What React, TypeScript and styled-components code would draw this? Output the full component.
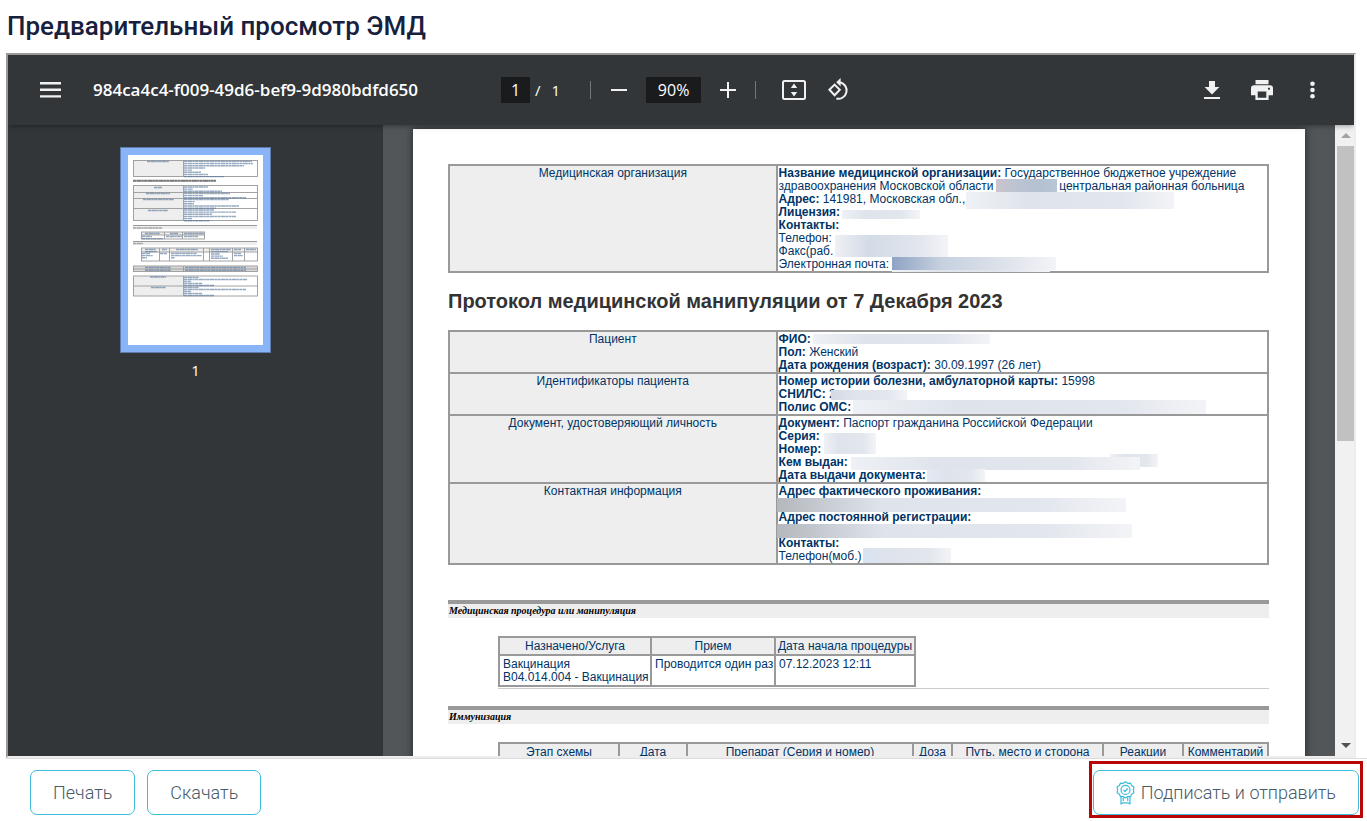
import React from 'react';
import styled, { createGlobalStyle } from 'styled-components';

const GlobalStyle = createGlobalStyle`
  * { box-sizing: border-box; }
  html, body { margin: 0; height: 100%; background: #fff; }
  #root { height: 100%; }
`;

const Screen = styled.div`
  height: 100vh;
  display: flex;
  flex-direction: column;
  overflow: hidden;
  font-family: Roboto, 'Liberation Sans', sans-serif;
`;

const Title = styled.h1`
  margin: 0;
  padding: 8px 7px 9px;
  font-size: 26px;
  line-height: 36px;
  font-weight: 500;
  color: #17203d;
  white-space: nowrap;
`;

const Viewer = styled.section`
  flex: 1;
  min-height: 0;
  margin: 0 11px 0 6px;
  display: flex;
  flex-direction: column;
  overflow: hidden;
  border: 2px solid;
  border-color: #999 #ededed #ededed #999;
`;

/* ---------- toolbar ---------- */

const Toolbar = styled.header`
  flex: none;
  height: 70px;
  display: grid;
  grid-template-columns: 493px 1fr auto;
  align-items: center;
  background: #323639;
  color: #fff;
  box-shadow: 0 0 6px rgba(0, 0, 0, 0.5);
  position: relative;
  z-index: 1;
  font-family: 'Open Sans', 'Noto Sans', sans-serif;
`;

const ToolGroup = styled.div<{ $gap?: number; $pad?: string }>`
  display: flex;
  align-items: center;
  gap: ${(p) => p.$gap ?? 0}px;
  padding: ${(p) => p.$pad ?? '0'};
`;

const IconButton = styled.button`
  width: 24px;
  height: 24px;
  padding: 0;
  border: 0;
  background: none;
  color: #f1f1f1;
  display: grid;
  place-items: center;
`;

const FileName = styled.span`
  font-size: 17px;
  line-height: 24px;
  font-weight: 600;
`;

const ToolInput = styled.input<{ $width: number }>`
  width: ${(p) => p.$width}px;
  height: 26px;
  padding: 0;
  border: 0;
  background: #191b1c;
  color: #fff;
  text-align: center;
  font: 400 16px/26px 'Open Sans', 'Noto Sans', sans-serif;
`;

const PageTotal = styled.span`
  display: flex;
  gap: 11px;
  padding: 0 30px 0 5px;
  font-size: 15px;
  line-height: 24px;
`;

const Divider = styled.span`
  width: 1px;
  height: 18px;
  background: #74777a;
`;

/* ---------- viewer body ---------- */

const Body = styled.div`
  flex: 1;
  min-height: 0;
  display: flex;
  overflow: hidden;
  background: #525659;
`;

const Sidebar = styled.aside`
  flex: none;
  width: 375px;
  background: #323639;
  display: flex;
  flex-direction: column;
  align-items: center;
  padding-top: 22px;
  color: #fff;
  font: 400 15px/20px 'Open Sans', 'Noto Sans', sans-serif;
`;

const Thumb = styled.button`
  padding: 7px;
  margin-bottom: 7px;
  border: 1px solid #5f7cab;
  background: #8ab4f8;
  display: block;
  line-height: 0;
`;

const Pane = styled.main`
  flex: 1;
  min-width: 0;
  padding: 4px 30px 0;
  overflow: hidden;
`;

const Page = styled.article`
  min-height: 1200px;
  padding: 35px 36px 0 35px;
  background: #fff;
  box-shadow: 0 0 8px rgba(0, 0, 0, 0.55);
  color: #003366;
  font: 400 12px/13px 'Liberation Sans', Arial, sans-serif;
`;

const Scrollbar = styled.div`
  flex: none;
  width: 19px;
  padding: 0 0 0 2px;
  background: #f1f1f1;
  display: flex;
  flex-direction: column;
  align-items: center;
`;

const ScrollArrow = styled.span<{ $down?: boolean }>`
  flex: none;
  height: 21px;
  display: grid;
  place-items: center;
  &::before {
    content: '';
    border: 5px solid transparent;
    border-${(p) => (p.$down ? 'top' : 'bottom')}-color: ${(p) => (p.$down ? '#505050' : '#a3a3a3')};
    border-${(p) => (p.$down ? 'bottom' : 'top')}-width: 0;
  }
`;

const ScrollTrack = styled.div`
  flex: 1;
  width: 100%;
  &::before {
    content: '';
    display: block;
    height: 50%;
    background: #c1c1c1;
  }
`;

/* ---------- document ---------- */

const InfoTable = styled.table`
  width: 100%;
  table-layout: fixed;
  border-collapse: collapse;
  th, td {
    border: 2px solid #999;
    padding: 1px 1px 0;
    vertical-align: top;
    font-weight: 400;
  }
  th {
    width: 40%;
    background: #eee;
    text-align: center;
  }
`;

const Lines = styled.div`
  position: relative;
  white-space: nowrap;
`;

const DocTitle = styled.h2`
  margin: 16px 0 17px;
  font-size: 20px;
  line-height: 24px;
  font-weight: 700;
  color: #333;
`;

type MaskProps = { $x: number; $y: number; $w: number; $h: number; $from?: string; $to?: string };

const Mask = styled.span<MaskProps>`
  position: absolute;
  left: ${(p) => p.$x}px;
  top: ${(p) => p.$y}px;
  width: ${(p) => p.$w}px;
  height: ${(p) => p.$h}px;
  background: linear-gradient(
    90deg,
    ${(p) => p.$from ?? '#eef1f5'},
    ${(p) => p.$to ?? '#dfe4ec'} 30%,
    ${(p) => (p.$to === '#bcc4d2' ? '#b3c1d1' : '#e2e6ed')} 75%,
    ${(p) => (p.$to === '#bcc4d2' ? '#b8c6d6' : '#f3f4f7')}
  );
`;

const NameGap = styled.span`
  display: inline-block;
  width: 59px;
`;

const SectionTitle = styled.h3<{ $top: number }>`
  margin: ${(p) => p.$top}px 0 18px;
  padding: 0 1px;
  border-top: 4px solid #999;
  background: #eee;
  color: #000;
  font: italic 700 10px/14px 'Liberation Serif', 'Times New Roman', serif;
`;

const Indent = styled.div`
  margin-left: 50px;
  border-bottom: 1px solid #ccc;
  padding-bottom: 1px;
`;

const DataTable = styled.table<{ $full?: boolean }>`
  width: ${(p) => (p.$full ? '100%' : '418px')};
  table-layout: fixed;
  border-collapse: collapse;
  white-space: nowrap;
  th, td {
    border: 2px solid #999;
    padding: 2px 0 1px 3px;
    vertical-align: top;
    font-weight: 400;
    text-align: left;
  }
  th {
    padding: 2px 0 1px;
    background: #eee;
    text-align: center;
  }
`;

/* ---------- footer ---------- */

const Footer = styled.footer`
  flex: none;
  height: 63px;
  margin-left: 6px;
  padding: 11px 8px 0 24px;
  border-top: 1px solid #ddd;
  display: flex;
  align-items: flex-start;
  gap: 12px;
`;

const ActionButton = styled.button`
  height: 45px;
  padding: 0 22px;
  border: 1px solid #3bbddb;
  border-radius: 7px;
  background: #fff;
  color: #485a69;
  display: flex;
  align-items: center;
  gap: 6px;
  font: 300 18px/24px Roboto, 'Liberation Sans', sans-serif;
  white-space: nowrap;
`;

const Highlight = styled.div`
  position: relative;
  margin-left: auto;
  &::after {
    content: '';
    position: absolute;
    inset: -9px -4px -3px;
    border: 3px solid #b90504;
    pointer-events: none;
  }
`;

/* ---------- drawings ---------- */

const MenuIcon = () => (
  <svg width="21" height="16" viewBox="0 0 21 16" fill="currentColor">
    <path d="M0 0h21v2.4H0zM0 6.6h21V9H0zM0 13.2h21v2.4H0z" />
  </svg>
);

const MinusIcon = () => (
  <svg width="16" height="16" viewBox="0 0 16 16" fill="currentColor">
    <path d="M0 7h16v2H0z" />
  </svg>
);

const PlusIcon = () => (
  <svg width="16" height="16" viewBox="0 0 16 16" fill="currentColor">
    <path d="M0 7h7V0h2v7h7v2H9v7H7V9H0z" />
  </svg>
);

const FitIcon = () => (
  <svg width="24" height="20" viewBox="0 0 24 20" fill="currentColor">
    <rect x="1" y="1" width="22" height="18" rx="1.5" fill="none" stroke="currentColor" strokeWidth="2" />
    <path d="M12 3.4l3.2 4.6H8.800zM12 16.600l3.200-4.600H8.800z" />
  </svg>
);

const RotateIcon = () => (
  <svg width="24" height="24" viewBox="0 0 24 24" fill="none" stroke="currentColor" strokeWidth="2">
    <path d="M7.6 6.6l5.2 5.2-5.2 5.4-5.2-5.4z" />
    <path d="M13 4.2a8.3 8.3 0 1 1-3.6 16.4" />
    <path d="M13.6 0v8.4L9.2 4.2z" fill="currentColor" stroke="none" />
  </svg>
);

const DownloadIcon = () => (
  <svg width="16" height="18" viewBox="0 0 16 18" fill="currentColor">
    <path d="M5 0h6v6h4.4L8 13.4.6 6H5zM0 16h16v2H0z" />
  </svg>
);

const PrintIcon = () => (
  <svg width="22" height="20" viewBox="0 0 22 20" fill="currentColor">
    <path
      fillRule="evenodd"
      d="M4.5 0h13v4.2h-13zM3.5 5.2h15A3.3 3.3 0 0 1 22 8.5v6.8h-4.4V20H4.4v-4.7H0V8.500a3.300 3.300 0 0 1 3.500-3.300zM6.700 11.500v6.200h8.600v-6.200zM18 7.600a1.100 1.100 0 1 0 .01 0z"
    />
  </svg>
);

const MoreIcon = () => (
  <svg width="5" height="18" viewBox="0 0 5 18" fill="currentColor">
    <circle cx="2.5" cy="2.7" r="2.3" />
    <circle cx="2.5" cy="9" r="2.3" />
    <circle cx="2.5" cy="15.3" r="2.3" />
  </svg>
);

const BadgeIcon = () => (
  <svg width="19" height="24" viewBox="0 0 19 24" fill="none" stroke="#3bbddb" strokeWidth="1.2" strokeLinejoin="round">
    <path d="M9.500 .8l2.300 1.500 2.700-.2 1.100 2.500 2.300 1.500-.5 2.800.5 2.800-2.300 1.500-1.100 2.500-2.700-.2-2.300 1.500-2.300-1.500-2.700.2-1.100-2.500L1.100 11.700l.5-2.800-.5-2.800 2.300-1.500 1.100-2.500 2.700.2z" />
    <circle cx="9.5" cy="8.9" r="4.5" />
    <path d="M7.500 9l1.500 1.500 2.700-3" />
    <path d="M5 16v7l2-1.200h5l2 1.200v-7M7.300 16.500V20M11.700 16.500V20" />
  </svg>
);

type Bars = { x: number; y: number; w: number }[];

const Scribble = ({ bars, color = '#4f7299' }: { bars: Bars; color?: string }) => (
  <g stroke={color} strokeWidth="1.4" strokeDasharray="3 .4 5 .3 2 .4" opacity=".6">
    {bars.map((b, i) => (
      <path key={i} d={`M${b.x} ${b.y}h${b.w}`} />
    ))}
  </g>
);

const stack = (x: number, y: number, widths: number[], step = 2.16): Bars =>
  widths.map((w, i) => ({ x, y: y + i * step, w }));

const Grid = ({ x, y, cols, rows }: { x: number; y: number; cols: number[]; rows: number[] }) => {
  const w = cols.reduce((a, b) => a + b, 0);
  const h = rows.reduce((a, b) => a + b, 0);
  let cx = x;
  let cy = y;
  return (
    <g stroke="#999" strokeWidth=".9" fill="none">
      <rect x={x} y={y} width={w} height={h} />
      {cols.slice(0, -1).map((c, i) => {
        cx += c;
        return <path key={i} d={`M${cx} ${y}v${h}`} />;
      })}
      {rows.slice(0, -1).map((r, i) => {
        cy += r;
        return <path key={`r${i}`} d={`M${x} ${cy}h${w}`} />;
      })}
    </g>
  );
};

const PageThumbnail = () => (
  <svg width="135" height="190" viewBox="0 0 135 190">
    <rect width="135" height="190" fill="#fff" />
    <g fill="#eee">
      <rect x="5" y="5" width="50" height="17" />
      <rect x="5" y="31" width="50" height="35" />
      <rect x="13" y="77" width="63" height="3" />
      <rect x="13" y="93" width="116" height="4" />
      <rect x="5" y="111" width="124" height="5" fill="#d9d9d9" />
      <rect x="5" y="121" width="50" height="20" />
      <rect x="5" y="71" width="124" height="3" />
      <rect x="5" y="87" width="124" height="3" />
    </g>
    <Grid x={5.5} y={5.5} cols={[50, 74]} rows={[16]} />
    <Grid x={5.5} y={30.5} cols={[50, 74]} rows={[7, 6, 10, 12]} />
    <path d="M5 70.500h124M5 86.500h124" stroke="#999" />
    <Grid x={13.5} y={77} cols={[23, 18, 22]} rows={[3, 4]} />
    <Grid x={13.5} y={93} cols={[18, 10, 34, 6, 23, 12, 13]} rows={[4, 9]} />
    <Grid x={5.5} y={111} cols={[50, 74]} rows={[3, 2.5]} />
    <Grid x={5.5} y={121} cols={[50, 74]} rows={[10, 10]} />
    <Scribble
      bars={[
        ...stack(56, 6.5, [68, 69, 60, 21, 8, 17, 24, 40]),
        ...stack(56, 32, [24, 9, 38]),
        ...stack(56, 38.5, [46, 19, 62]),
        ...stack(56, 44.5, [45, 11, 10, 55, 32]),
        ...stack(56, 55, [30, 52, 28, 52, 8, 26]),
        ...stack(19, 6.5, [22]),
        ...stack(26, 32.5, [8]),
        ...stack(18, 38.5, [24]),
        ...stack(15, 44.5, [31]),
        ...stack(20, 55.5, [20]),
        ...stack(17, 78.5, [15]),
        ...stack(42, 78.5, [8]),
        ...stack(56, 78.5, [20]),
        ...stack(14, 81.5, [10, 21]),
        ...stack(38, 81.5, [16]),
        ...stack(56, 81.5, [14]),
        ...stack(17, 94.5, [11, 12]),
        ...stack(34, 94.5, [5]),
        ...stack(48, 94.5, [22]),
        ...stack(83, 94.5, [20, 17]),
        ...stack(106, 94.5, [7]),
        ...stack(118, 94.5, [10]),
        ...stack(14, 98.5, [8, 11, 5]),
        ...stack(32, 98.5, [7]),
        ...stack(43, 98.5, [26, 31, 4]),
        ...stack(83, 99, [9, 12, 17]),
        ...stack(106, 98.5, [7, 9]),
        ...stack(17, 112.5, [26, 26], 2.7),
        ...stack(57, 112.5, [61, 61], 2.7),
        ...stack(22, 122, [16]),
        ...stack(23, 132.5, [15]),
        ...stack(56, 122.5, [15, 63, 7, 18, 30], 2),
        ...stack(56, 132.5, [15, 62, 7, 18, 30], 2),
      ]}
    />
    <Scribble color="#222" bars={[{ x: 5, y: 25.5, w: 83 }, { x: 5, y: 26, w: 83 }]} />
    <Scribble color="#777" bars={[{ x: 5, y: 73, w: 29 }, { x: 5, y: 88.5, w: 10 }]} />
  </svg>
);

/* ---------- page ---------- */

export default function App() {
  return (
    <Screen>
      <GlobalStyle />
      <Title>Предварительный просмотр ЭМД</Title>

      <Viewer>
        <Toolbar>
          <ToolGroup $gap={31} $pad="0 0 0 30px">
            <IconButton aria-label="Меню"><MenuIcon /></IconButton>
            <FileName>984ca4c4-f009-49d6-bef9-9d980bdfd650</FileName>
          </ToolGroup>
          <ToolGroup>
            <ToolInput $width={29} defaultValue="1" aria-label="Страница" />
            <PageTotal><span>/</span><span>1</span></PageTotal>
            <Divider />
            <ToolGroup $gap={15} $pad="0 15px 0 16px">
              <IconButton aria-label="Уменьшить"><MinusIcon /></IconButton>
              <ToolInput $width={55} defaultValue="90%" aria-label="Масштаб" />
              <IconButton aria-label="Увеличить"><PlusIcon /></IconButton>
            </ToolGroup>
            <Divider />
            <ToolGroup $gap={21} $pad="0 0 0 26px">
              <IconButton aria-label="По размеру страницы"><FitIcon /></IconButton>
              <IconButton aria-label="Повернуть"><RotateIcon /></IconButton>
            </ToolGroup>
          </ToolGroup>
          <ToolGroup $gap={26} $pad="0 30px 0 0">
            <IconButton aria-label="Скачать файл"><DownloadIcon /></IconButton>
            <IconButton aria-label="Распечатать"><PrintIcon /></IconButton>
            <IconButton aria-label="Ещё"><MoreIcon /></IconButton>
          </ToolGroup>
        </Toolbar>

        <Body>
          <Sidebar>
            <Thumb aria-label="Страница 1"><PageThumbnail /></Thumb>
            <span>1</span>
          </Sidebar>

          <Pane>
            <Page>
              <InfoTable>
                <tbody>
                  <tr>
                    <th scope="row">Медицинская организация</th>
                    <td>
                      <Lines>
                        <b>Название медицинской организации:</b> Государственное бюджетное учреждение<br />
                        здравоохранения Московской области <NameGap /> центральная районная больница<br />
                        <b>Адрес:</b> 141981, Московская обл.,<br />
                        <b>Лицензия:</b><br />
                        <b>Контакты:</b><br />
                        Телефон:<br />
                        Факс(раб.<br />
                        Электронная почта:
                        <Mask $x={217} $y={12} $w={61} $h={13} $from="#cbc4cc" $to="#bcc4d2" />
                        <Mask $x={187} $y={25} $w={208} $h={17} />
                        <Mask $x={63} $y={43} $w={78} $h={9} />
                        <Mask $x={56} $y={68} $w={113} $h={22} $to="#d3dbe6" />
                        <Mask $x={113} $y={95} $w={158} $h={10} />
                        <Mask $x={113} $y={90} $w={164} $h={13} $from="#8fa3c4" $to="#c6d0df" />
                      </Lines>
                    </td>
                  </tr>
                </tbody>
              </InfoTable>

              <DocTitle>Протокол медицинской манипуляции от 7 Декабря 2023</DocTitle>

              <InfoTable>
                <tbody>
                  <tr>
                    <th scope="row">Пациент</th>
                    <td>
                      <Lines>
                        <b>ФИО:</b><br />
                        <b>Пол:</b> Женский<br />
                        <b>Дата рождения (возраст):</b> 30.09.1997 (26 лет)
                        <Mask $x={34} $y={1} $w={177} $h={10} />
                      </Lines>
                    </td>
                  </tr>
                  <tr>
                    <th scope="row">Идентификаторы пациента</th>
                    <td>
                      <Lines>
                        <b>Номер истории болезни, амбулаторной карты:</b> 15998<br />
                        <b>СНИЛС:</b> 2<br />
                        <b>Полис ОМС:</b>
                        <Mask $x={52} $y={15} $w={76} $h={10} $from="#d3dae3" />
                        <Mask $x={74} $y={25} $w={353} $h={14} />
                      </Lines>
                    </td>
                  </tr>
                  <tr>
                    <th scope="row">Документ, удостоверяющий личность</th>
                    <td>
                      <Lines>
                        <b>Документ:</b> Паспорт гражданина Российской Федерации<br />
                        <b>Серия:</b><br />
                        <b>Номер:</b><br />
                        <b>Кем выдан:</b><br />
                        <b>Дата выдачи документа:</b>
                        <Mask $x={45} $y={16} $w={52} $h={21} />
                        <Mask $x={331} $y={37} $w={48} $h={13} />
                        <Mask $x={72} $y={40} $w={289} $h={13} />
                        <Mask $x={148} $y={52} $w={58} $h={13} $from="#e3eaf3" />
                      </Lines>
                    </td>
                  </tr>
                  <tr>
                    <th scope="row">Контактная информация</th>
                    <td>
                      <Lines>
                        <b>Адрес фактического проживания:</b><br />
                        <br />
                        <b>Адрес постоянной регистрации:</b><br />
                        <br />
                        <b>Контакты:</b><br />
                        Телефон(моб.)
                        <Mask $x={-2} $y={13} $w={349} $h={14} $from="#b4b8bd" />
                        <Mask $x={-2} $y={39} $w={355} $h={14} $from="#b4b8bd" />
                        <Mask $x={84} $y={63} $w={88} $h={15} $from="#d9e3f1" />
                      </Lines>
                    </td>
                  </tr>
                </tbody>
              </InfoTable>

              <SectionTitle $top={35}>Медицинская процедура или манипуляция</SectionTitle>
              <Indent>
                <DataTable>
                  <colgroup>
                    <col style={{ width: 152 }} />
                    <col style={{ width: 124 }} />
                    <col />
                  </colgroup>
                  <thead>
                    <tr><th>Назначено/Услуга</th><th>Прием</th><th>Дата начала процедуры</th></tr>
                  </thead>
                  <tbody>
                    <tr>
                      <td>Вакцинация<br />B04.014.004 - Вакцинация</td>
                      <td>Проводится один раз</td>
                      <td>07.12.2023 12:11</td>
                    </tr>
                  </tbody>
                </DataTable>
              </Indent>

              <SectionTitle $top={17}>Иммунизация</SectionTitle>
              <Indent>
                <DataTable $full>
                  <colgroup>
                    <col style={{ width: 120 }} />
                    <col style={{ width: 68 }} />
                    <col />
                    <col style={{ width: 39 }} />
                    <col style={{ width: 151 }} />
                    <col style={{ width: 80 }} />
                    <col style={{ width: 85 }} />
                  </colgroup>
                  <thead>
                    <tr>
                      <th>Этап схемы</th>
                      <th>Дата</th>
                      <th>Препарат (Серия и номер)</th>
                      <th>Доза</th>
                      <th>Путь, место и сторона</th>
                      <th>Реакции</th>
                      <th>Комментарий</th>
                    </tr>
                  </thead>
                </DataTable>
              </Indent>
            </Page>
          </Pane>

          <Scrollbar aria-hidden="true">
            <ScrollArrow />
            <ScrollTrack />
            <ScrollArrow $down />
          </Scrollbar>
        </Body>
      </Viewer>

      <Footer>
        <ActionButton>Печать</ActionButton>
        <ActionButton>Скачать</ActionButton>
        <Highlight>
          <ActionButton><BadgeIcon />Подписать и отправить</ActionButton>
        </Highlight>
      </Footer>
    </Screen>
  );
}
